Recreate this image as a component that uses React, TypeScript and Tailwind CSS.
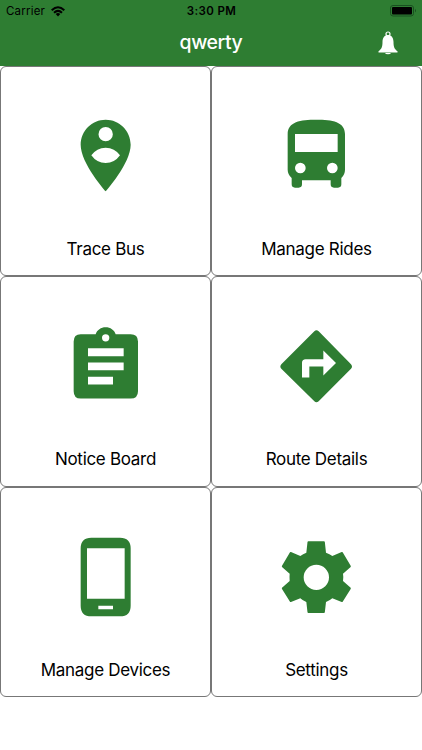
import type { ReactNode } from "react"

interface MenuItem {
  label: string
  viewBox: string
  icon: ReactNode
}

const menuItems: MenuItem[] = [
  {
    label: "Trace Bus",
    viewBox: "9 24 258 258",
    icon: (
      <path d="M137 44C96 44 62 77 62 119C62 175 137 259 137 259S212 175 212 119C212 77 178 44 137 44ZM137 66A21.5 21.5 0 1 1 137 109A21.5 21.5 0 0 1 137 66ZM94 151Q110 128 137 128T180 151Q164 174 137 174T94 151Z" />
    ),
  },
  {
    label: "Manage Rides",
    viewBox: "12 24 258 258",
    icon: (
      <path d="M53 87C53 50 91 44 139 44S225 50 225 87V194Q225 208 214 219V238Q214 248 204 248H192Q182 248 182 238V226H96V238Q96 248 86 248H75Q65 248 65 238V219Q53 208 53 194ZM75 87V141H203V87ZM91 173A16 16 0 1 0 91 205A16 16 0 1 0 91 173ZM187 173A16 16 0 1 0 187 205A16 16 0 1 0 187 173Z" />
    ),
  },
  {
    label: "Notice Board",
    viewBox: "9 23.5 258 258",
    icon: (
      <path d="M62 57H107C111 44 123 36 137 36S163 44 167 57H212Q234 57 234 79V228Q234 250 212 250H62Q41 250 41 228V79Q41 57 62 57ZM137 57A11 11 0 1 0 137 79A11 11 0 1 0 137 57ZM84 99V123H191V99ZM84 142V165H191V142ZM84 185V208H159V185Z" />
    ),
  },
  {
    label: "Route Details",
    viewBox: "12 23.5 258 258",
    icon: (
      <path d="M133 48Q139 42 146 48L243 147Q249 154 243 161L146 258Q139 264 133 258L34 161Q28 154 34 147ZM160 106V132H107Q96 132 96 143V187H118V154H160V181L198 143.500Z" />
    ),
  },
  {
    label: "Manage Devices",
    viewBox: "9 26 258 258",
    icon: (
      <path d="M94 37H180Q212 37 212 69V241Q212 273 180 273H94Q62 273 62 241V69Q62 37 94 37ZM81 69V220H194V69ZM115 241V252H159V241Z" />
    ),
  },
  {
    label: "Settings",
    viewBox: "12 26 258 258",
    icon: (
      <path d="M115 48H162Q164 48 164.500 50L168 82Q179 86 187 92L215 80Q217 79 218 81L242 121Q243 123 242 125L219 145Q221 156 219 167L242 187Q243 189 242 191L218 229Q217 231 215 230L187 219Q179 226 168 230L164.500 261Q164 263 162 263H115Q113 263 112.500 261L109 230Q98 226 91 219L63 230Q61 231 60 229L36 191Q35 189 36 187L59 167Q58 156 59 145L36 125Q35 123 36 121L60 81Q61 79 63 80L91 92Q99 86 109 82L112.500 50Q113 48 115 48ZM139 118A38 38 0 1 0 139 194A38 38 0 1 0 139 118Z" />
    ),
  },
]

function WifiIcon() {
  return (
    <svg viewBox="0 0 14 11" className="h-[11px] w-3.5" fill="none" stroke="currentColor" strokeWidth="2">
      <path d="M.7 4.200Q7-1.800 13.300 4.200M3 6.700Q7 3 11 6.700" />
      <path d="M4.700 8Q7 6.200 9.300 8L7 10.500Z" fill="currentColor" stroke="none" />
    </svg>
  )
}

function BatteryIcon() {
  return (
    <svg viewBox="0 0 27 12" className="h-3 w-[27px]">
      <rect x=".5" y=".5" width="23" height="10.500" rx="2.500" fill="none" stroke="#195020" />
      <rect x="2" y="2" width="20" height="7.500" rx="1" fill="#000" />
      <path d="M25 4Q27 5.700 25 7.500Z" fill="#195020" />
    </svg>
  )
}

function BellIcon() {
  return (
    <svg viewBox="0 0 20 24" className="h-6 w-5">
      <circle cx="10" cy="3" r="2" fill="none" stroke="#fff" strokeWidth="1.200" />
      <path d="M10 4C14 4 15.500 7.500 15.500 11C15.500 16 16.500 18 19.500 20.200V21.500H.5V20.200C3.500 18 4.500 16 4.500 11C4.500 7.500 6 4 10 4ZM7 22H13Q12.500 23.200 10 23.200T7 22Z" fill="#fff" />
    </svg>
  )
}

function StatusBar() {
  return (
    <div className="grid h-[22px] grid-cols-3 items-center pr-[5px] pl-1.5 text-[11.5px] text-black">
      <div className="flex items-center gap-1.5">
        <span className="pt-0.5 tracking-[0.2px]">Carrier</span>
        <WifiIcon />
      </div>
      <span className="pt-0.5 text-center font-semibold tracking-[0.4px]">3:30 PM</span>
      <div className="flex justify-end">
        <BatteryIcon />
      </div>
    </div>
  )
}

function MenuCard({ label, viewBox, icon }: MenuItem) {
  return (
    <button className="flex h-[210.67px] flex-col items-center rounded-[6px] border border-[#777] bg-white pt-[46px]">
      <svg viewBox={viewBox} className="size-[86px] shrink-0 text-[#2e7d32]" fill="currentColor" fillRule="evenodd">
        {icon}
      </svg>
      <span className="mt-[38px] text-[17px] leading-6 tracking-[-0.3px] text-black">{label}</span>
    </button>
  )
}

export default function App() {
  return (
    <div className="h-[750px] w-[422px] overflow-hidden bg-white font-['Inter',sans-serif]">
      <header className="h-[65.5px] bg-[#2e7d32]">
        <StatusBar />
        <div className="grid h-[41px] grid-cols-3 items-center text-white">
          <h1 className="col-start-2 text-center text-[19.5px] font-medium tracking-[-0.45px]">qwerty</h1>
          <button className="mr-6 justify-self-end" aria-label="Notifications">
            <BellIcon />
          </button>
        </div>
      </header>
      <main className="grid grid-cols-2">
        {menuItems.map((item) => (
          <MenuCard key={item.label} {...item} />
        ))}
      </main>
    </div>
  )
}
